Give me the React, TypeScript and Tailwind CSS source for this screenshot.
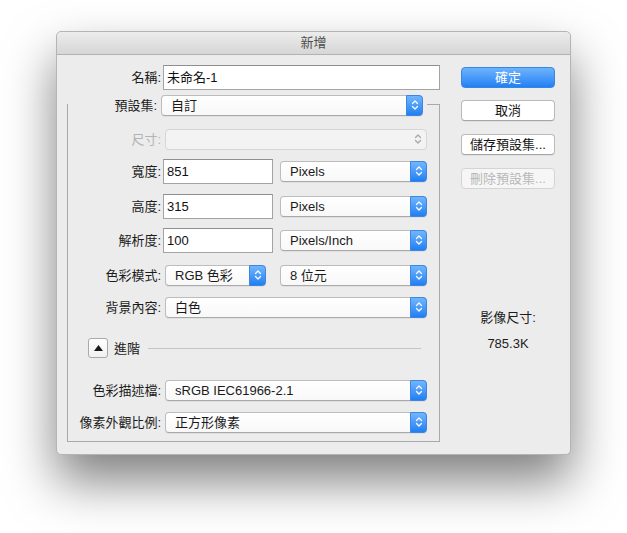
import type { ReactNode } from "react";
import clsx from "clsx";

const FONT = "font-['Liberation_Sans','Noto_Sans_CJK_TC',sans-serif]";

function Chevrons({ color }: { color: string }) {
  return (
    <svg width="8" height="12" viewBox="0 0 8 12" fill="none">
      <path d="M1.5 4.5 L4 2 L6.5 4.5" stroke={color} strokeWidth="1.3" strokeLinecap="round" strokeLinejoin="round" />
      <path d="M1.5 7.5 L4 10 L6.5 7.5" stroke={color} strokeWidth="1.3" strokeLinecap="round" strokeLinejoin="round" />
    </svg>
  );
}

function Popup({ value, width, disabled }: { value?: string; width: string; disabled?: boolean }) {
  return (
    <div
      className={clsx(
        "flex h-[21px] items-stretch rounded-[4px] border",
        width,
        disabled
          ? "border-[#d6d6d6] bg-[#f3f3f3]"
          : "border-[#bcbcbc] border-b-[#a9a9a9] bg-gradient-to-b from-white to-[#f8f8f8] shadow-[0_1px_0_rgba(0,0,0,0.05)]"
      )}
    >
      <span className="flex flex-1 items-center pl-[9px] text-[13px] leading-none text-[#1a1a1a]">{value}</span>
      {disabled ? (
        <span className="flex w-[16px] items-center justify-center">
          <Chevrons color="#a8a8a8" />
        </span>
      ) : (
        <span className="-my-px -mr-px flex w-[17px] items-center justify-center rounded-r-[4px] border border-[#3f86e4] bg-gradient-to-b from-[#6fb6fd] to-[#1d7ff3]">
          <Chevrons color="#ffffff" />
        </span>
      )}
    </div>
  );
}

function Field({ value, width }: { value: string; width: string }) {
  return (
    <div
      className={clsx(
        "flex h-[25px] items-center border border-[#a3a3a3] border-t-[#8f8f8f] bg-white pl-[3px] text-[13px] leading-none text-[#111]",
        width
      )}
    >
      {value}
    </div>
  );
}

function Row({ label, children, className, disabled }: { label: string; children: ReactNode; className?: string; disabled?: boolean }) {
  return (
    <div className={clsx("flex h-[24px] items-center", className)}>
      <div className={clsx("w-[93px] shrink-0 text-right text-[13px] leading-none", disabled ? "text-[#b3b3b3]" : "text-[#1c1c1c]")}>
        {label}
      </div>
      {children}
    </div>
  );
}

function Button({ children, primary, disabled, className }: { children: ReactNode; primary?: boolean; disabled?: boolean; className?: string }) {
  return (
    <div
      className={clsx(
        "flex h-[21px] w-[94px] items-center justify-center rounded-[4px] border text-[13px] leading-none",
        primary
          ? "border-[#3b85e2] bg-gradient-to-b from-[#6db3fc] to-[#1f80f4] text-white"
          : disabled
            ? "border-[#d4d4d4] bg-[#f6f6f6] text-[#b8b8b8]"
            : "border-[#bababa] border-b-[#a6a6a6] bg-white text-[#151515] shadow-[0_1px_0_rgba(0,0,0,0.05)]",
        className
      )}
    >
      {children}
    </div>
  );
}

export default function App() {
  return (
    <div className={clsx("h-[533px] w-[627px] overflow-hidden bg-white pl-[56px] pt-[31px]", FONT)}>
      <div className="w-[515px] rounded-[5px] border border-[#b4b4b4] bg-[#ececec] shadow-[0_26px_50px_rgba(0,0,0,0.5)]">
        {/* title bar */}
        <div className="flex h-[23px] items-center justify-center rounded-t-[5px] border-b border-[#b2b2b2] bg-gradient-to-b from-[#ececec] to-[#d6d6d6] text-[13px] text-[#4c4c4c]">
          新增
        </div>

        <div className="flex pb-[12px] pl-[10px]">
          {/* form column */}
          <div className="w-[373px]">
            <Row label="名稱:" className="mt-[10px] pl-px">
              <Field value="未命名-1" width="ml-[2px] w-[277px]" />
            </Row>

            <div className="mt-[15px] border border-[#a9a9a9] pb-[7px]">
              <div className="-mt-[12px] flex h-[24px] items-center">
                <div className="flex h-[24px] items-center bg-[#ececec] pl-[14px] pr-[4px] text-[13px] leading-none text-[#1c1c1c]">
                  <span className="w-[75px] text-right">預設集:</span>
                </div>
                <div className="flex h-[24px] items-center bg-[#ececec] pr-[4px]">
                  <Popup value="自訂" width="w-[262px]" />
                </div>
              </div>

              <Row label="尺寸:" disabled className="mt-[10px]">
                <div className="ml-[4px]">
                  <Popup width="w-[262px]" disabled />
                </div>
              </Row>

              <Row label="寬度:" className="mt-[8px]">
                <Field value="851" width="ml-[2px] w-[110px]" />
                <div className="ml-[7px]">
                  <Popup value="Pixels" width="w-[147px]" />
                </div>
              </Row>

              <Row label="高度:" className="mt-[11px]">
                <Field value="315" width="ml-[2px] w-[110px]" />
                <div className="ml-[7px]">
                  <Popup value="Pixels" width="w-[147px]" />
                </div>
              </Row>

              <Row label="解析度:" className="mt-[10px]">
                <Field value="100" width="ml-[2px] w-[110px]" />
                <div className="ml-[7px]">
                  <Popup value="Pixels/Inch" width="w-[147px]" />
                </div>
              </Row>

              <Row label="色彩模式:" className="mt-[11px]">
                <div className="ml-[4px]">
                  <Popup value="RGB 色彩" width="w-[101px]" />
                </div>
                <div className="ml-[14px]">
                  <Popup value="8 位元" width="w-[147px]" />
                </div>
              </Row>

              <Row label="背景內容:" className="mt-[8px]">
                <div className="ml-[4px]">
                  <Popup value="白色" width="w-[262px]" />
                </div>
              </Row>

              <div className="mt-[17px] flex h-[24px] items-center pl-[20px] pr-[18px]">
                <div className="flex h-[20px] w-[20px] items-center justify-center rounded-[3px] border border-[#a9a9a9] bg-gradient-to-b from-white to-[#f1f1f1]">
                  <svg width="9" height="6" viewBox="0 0 9 6">
                    <path d="M4.5 0 L9 6 L0 6 Z" fill="#1a1a1a" />
                  </svg>
                </div>
                <span className="ml-[6px] text-[13px] leading-none text-[#1c1c1c]">進階</span>
                <div className="ml-[8px] h-px flex-1 bg-[#c4c4c4]" />
              </div>

              <Row label="色彩描述檔:" className="mt-[18px]">
                <div className="ml-[4px]">
                  <Popup value="sRGB IEC61966-2.1" width="w-[262px]" />
                </div>
              </Row>

              <Row label="像素外觀比例:" className="mt-[8px]">
                <div className="ml-[4px]">
                  <Popup value="正方形像素" width="w-[262px]" />
                </div>
              </Row>
            </div>
          </div>

          {/* buttons column */}
          <div className="ml-[21px] flex w-[94px] flex-col items-center pt-[12px]">
            <Button primary>確定</Button>
            <Button className="mt-[12px]">取消</Button>
            <Button className="mt-[13px]">儲存預設集...</Button>
            <Button disabled className="mt-[13px]">刪除預設集...</Button>
            <div className="mt-[122px] text-[13px] leading-none text-[#1c1c1c]">影像尺寸:</div>
            <div className="mt-[13px] text-[13px] leading-none text-[#1c1c1c]">785.3K</div>
          </div>
        </div>
      </div>
    </div>
  );
}
